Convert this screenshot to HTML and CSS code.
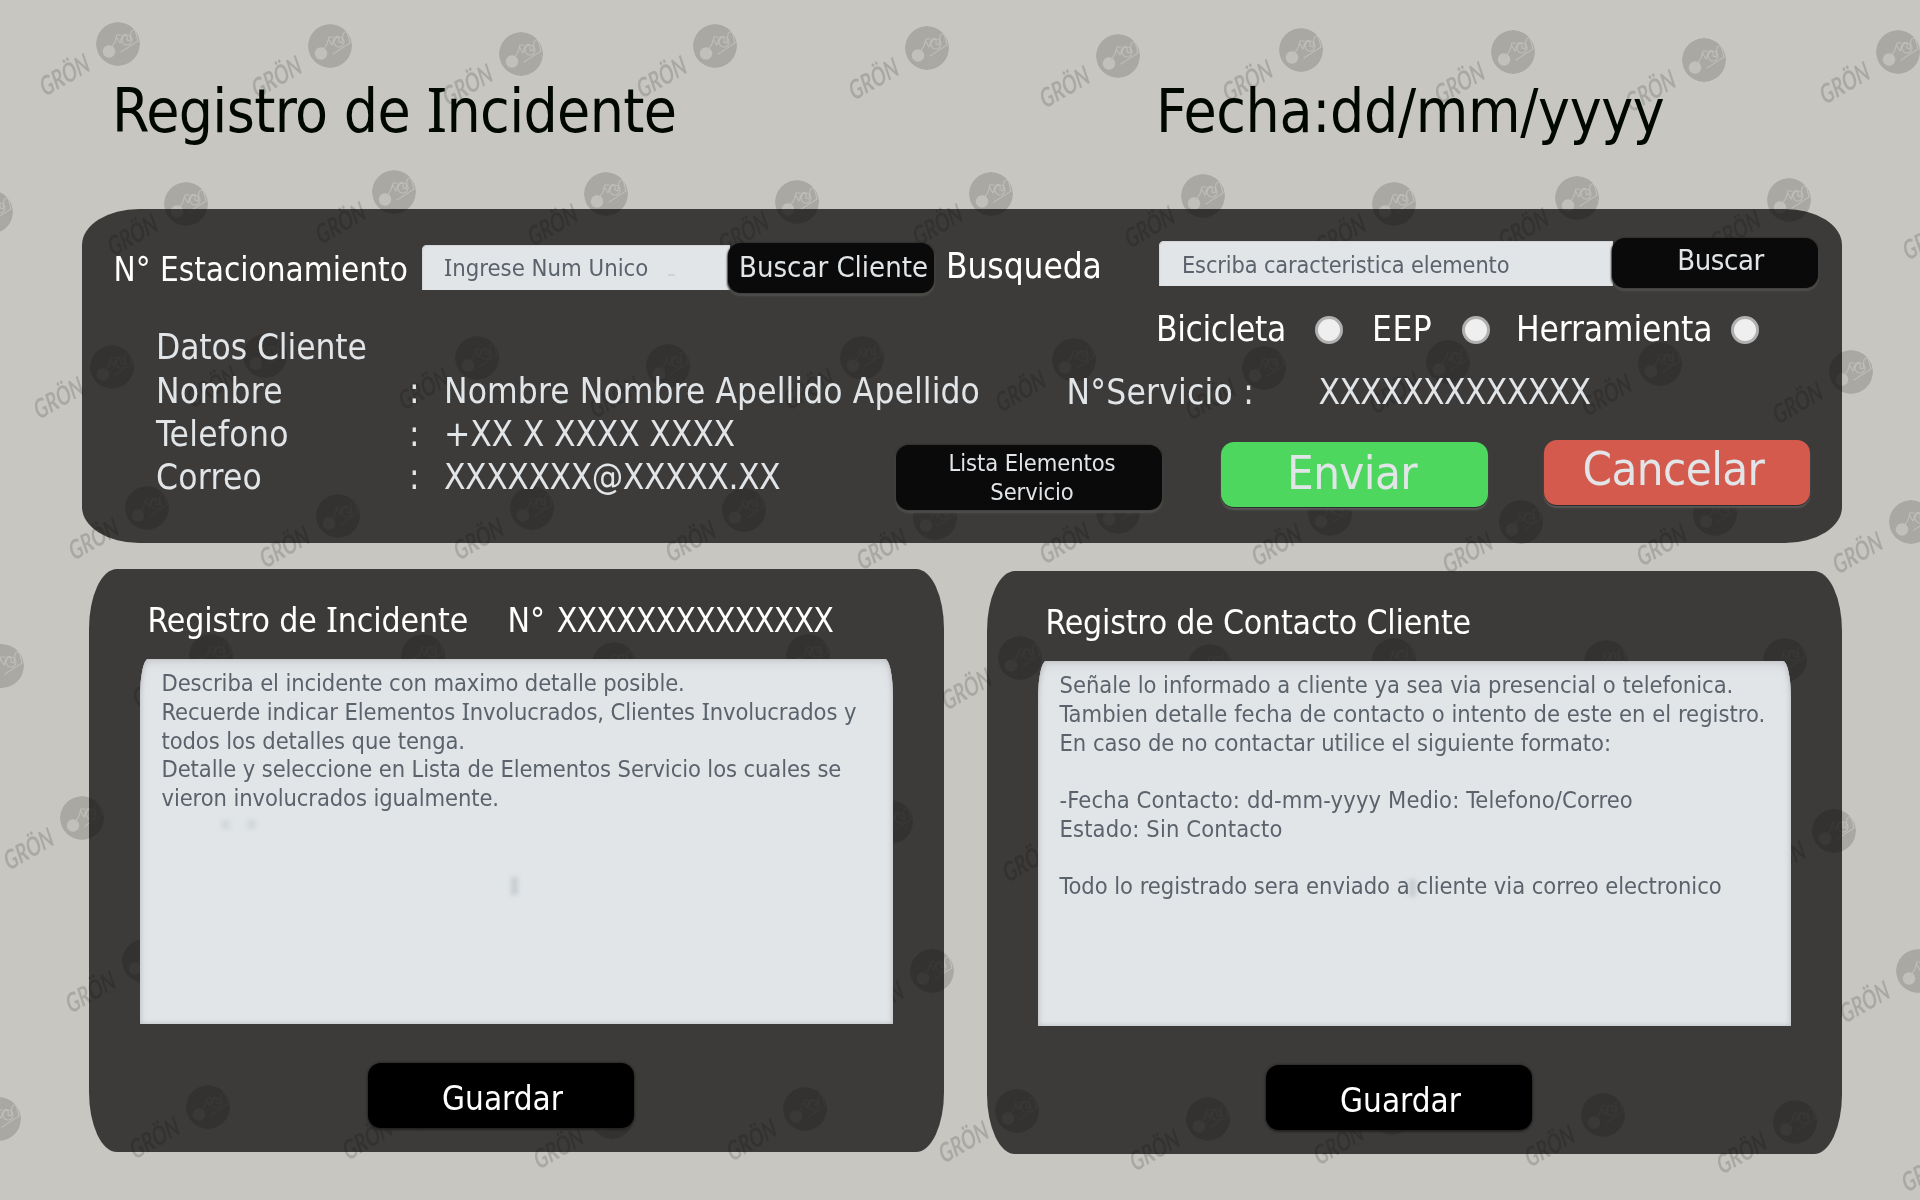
FILE: index.html
```html
<!DOCTYPE html>
<html lang="es">
<head>
<meta charset="utf-8">
<title>Registro de Incidente</title>
<link rel="stylesheet" href="styles.css">
</head>
<body>
<svg class="watermark" width="1920" height="1200" viewBox="0 0 1920 1200">
  <defs>
    <mask id="bike" x="-24" y="-24" width="48" height="48" maskUnits="userSpaceOnUse">
      <circle r="22" fill="#fff"/>
      <circle cx="-9" cy="7.5" r="6.2" fill="#333"/>
      <g fill="none" stroke="#444" stroke-width="1.1" stroke-linecap="round" stroke-linejoin="round">
        <path d="M-9 7 L-3 -2 L-1 -9 L3 -9 M-1 -6 L2 -1 L4 -6"/>
        <circle cx="9" cy="-4" r="5"/>
        <path d="M3 -5 C6 -12 10 -10 9 -4 L12 -3 L13 -12 Q16 -17 18 -11 L20 -3"/>
        <path d="M3 8 L20 -3" stroke-dasharray="2 1"/>
      </g>
    </mask>
    <g id="mark">
      <circle r="22" mask="url(#bike)"/>
      <text transform="translate(-73 53) rotate(-30) skewX(-6)" textLength="54" lengthAdjust="spacingAndGlyphs">GRÖN</text>
    </g>
  </defs>
  <g class="marks">
    <use href="#mark" x="118" y="44"/><use href="#mark" x="330" y="46"/><use href="#mark" x="521" y="54"/><use href="#mark" x="715" y="46"/><use href="#mark" x="927" y="48"/><use href="#mark" x="1118" y="56"/><use href="#mark" x="1301" y="50"/><use href="#mark" x="1513" y="52"/><use href="#mark" x="1704" y="60"/><use href="#mark" x="1898" y="52"/>
    <use href="#mark" x="-9" y="212"/><use href="#mark" x="186" y="204"/><use href="#mark" x="394" y="192"/><use href="#mark" x="606" y="194"/><use href="#mark" x="797" y="202"/><use href="#mark" x="991" y="194"/><use href="#mark" x="1203" y="196"/><use href="#mark" x="1394" y="204"/><use href="#mark" x="1577" y="198"/><use href="#mark" x="1789" y="200"/><use href="#mark" x="1981" y="208"/>
    <use href="#mark" x="112" y="367"/><use href="#mark" x="265" y="356"/><use href="#mark" x="477" y="358"/><use href="#mark" x="668" y="366"/><use href="#mark" x="862" y="358"/><use href="#mark" x="1074" y="360"/><use href="#mark" x="1264" y="368"/><use href="#mark" x="1448" y="362"/><use href="#mark" x="1660" y="364"/><use href="#mark" x="1851" y="372"/>
    <use href="#mark" x="147" y="508"/><use href="#mark" x="338" y="516"/><use href="#mark" x="532" y="508"/><use href="#mark" x="744" y="510"/><use href="#mark" x="935" y="518"/><use href="#mark" x="1118" y="512"/><use href="#mark" x="1330" y="514"/><use href="#mark" x="1521" y="522"/><use href="#mark" x="1715" y="514"/><use href="#mark" x="1911" y="522"/>
    <use href="#mark" x="2" y="666"/><use href="#mark" x="211" y="656"/><use href="#mark" x="423" y="656"/><use href="#mark" x="614" y="664"/><use href="#mark" x="808" y="656"/><use href="#mark" x="1020" y="658"/><use href="#mark" x="1210" y="666"/><use href="#mark" x="1394" y="660"/><use href="#mark" x="1606" y="662"/><use href="#mark" x="1785" y="660"/><use href="#mark" x="1997" y="668"/>
    <use href="#mark" x="82" y="818"/><use href="#mark" x="891" y="822"/><use href="#mark" x="1081" y="830"/><use href="#mark" x="1834" y="831"/>
    <use href="#mark" x="144" y="961"/><use href="#mark" x="932" y="971"/><use href="#mark" x="1918" y="971"/>
    <use href="#mark" x="-1" y="1119"/><use href="#mark" x="208" y="1107"/><use href="#mark" x="421" y="1108"/><use href="#mark" x="612" y="1117"/><use href="#mark" x="805" y="1109"/><use href="#mark" x="1017" y="1111"/><use href="#mark" x="1208" y="1119"/><use href="#mark" x="1392" y="1113"/><use href="#mark" x="1603" y="1115"/><use href="#mark" x="1795" y="1122"/><use href="#mark" x="1980" y="1140"/>
  </g>
</svg>

<header class="top">
  <h1 class="title">Registro de <span class="si">I</span>ncidente</h1>
  <div class="date">Fecha:dd/mm/yyyy</div>
</header>

<section class="panel service">
  <div class="client">
    <div class="search search-client">
      <label class="label-parking">N° Estacionamiento</label>
      <div class="field field-client"><span class="si">I</span>ngrese Num Unico<i class="dash"></i></div>
      <div class="btn btn-client">Buscar Cliente</div>
    </div>
    <div class="data">
      <div class="data-head">Datos Cliente</div>
      <span class="loose">Nombre</span><span>:</span><span>Nombre Nombre Apellido Apellido</span>
      <span class="loose">Telefono</span><span>:</span><span class="phone">+XX X XXXX XXXX</span>
      <span class="loose">Correo</span><span>:</span><span class="mail">XXXXXXX@XXXXX.XX</span>
    </div>
  </div>
  <div class="element">
    <div class="search search-element">
      <label class="label-search">Busqueda</label>
      <div class="field field-element">Escriba caracteristica elemento</div>
      <div class="btn btn-search">Buscar</div>
    </div>
    <div class="kinds">
      <label class="kind-bike">Bicicleta</label><span class="radio"></span>
      <label class="kind-eep">EEP</label><span class="radio"></span>
      <label class="kind-tool">Herramienta</label><span class="radio"></span>
    </div>
    <div class="number">
      <span class="number-label">N°Servicio :</span>
      <span class="number-value">XXXXXXXXXXXXX</span>
    </div>
    <div class="actions">
      <div class="btn btn-list">Lista Elementos<br>Servicio</div>
      <div class="btn btn-send">Enviar</div>
      <div class="btn btn-cancel">Cancelar</div>
    </div>
  </div>
</section>

<main class="records">
  <section class="panel record">
    <div class="record-head"><h2>Registro de <span class="si">I</span>ncidente</h2><span class="record-number">N° <span class="code">XXXXXXXXXXXXXX</span></span></div>
    <div class="area">
      <p>Describa el incidente con maximo detalle posible.</p>
      <p>Recuerde indicar Elementos <span class="si">I</span>nvolucrados, Clientes <span class="si">I</span>nvolucrados y<br>todos los detalles que tenga.</p>
      <p>Detalle y seleccione en Lista de Elementos Servicio los cuales se<br>vieron involucrados igualmente.</p>
      <i class="smudge smudge-a"></i><i class="smudge smudge-b"></i><i class="smudge smudge-c"></i>
    </div>
    <div class="btn btn-save">Guardar</div>
  </section>
  <section class="panel record record-contact">
    <div class="record-head"><h2 class="contact-title">Registro de Contacto Cliente</h2></div>
    <div class="area area-contact">
      <p>Señale lo informado a cliente ya sea via presencial o telefonica.<br><span class="second-line">Tambien detalle fecha de contacto o intento de este en el registro.</span><br>En caso de no contactar utilice el siguiente formato:</p>
      <p class="gap contact-line">-Fecha Contacto: dd-mm-yyyy Medio: Telefono/Correo<br>Estado: Sin Contacto</p>
      <p class="gap">Todo lo registrado sera enviado a cliente via correo electronico</p>
      <i class="smudge smudge-c"></i>
    </div>
    <div class="btn btn-save">Guardar</div>
  </section>
</main>
</body>
</html>
```
FILE: styles.css
```css
* { box-sizing: border-box; }

body {
  position: relative;
  width: 1920px;
  height: 1200px;
  margin: 0;
  overflow: hidden;
  background: #c8c6c0;
  color: #fff;
  font-family: "DejaVu Sans Condensed", "DejaVu Sans", sans-serif;
  font-stretch: condensed;
  white-space: nowrap;
}

h1, h2, p { margin: 0; font-weight: 400; }

.si { font-family: "Noto Sans", sans-serif; line-height: 0; font-size: 1.02em; }

/* Watermark lies over the panels, under their content */
.watermark { position: absolute; left: 0; top: 0; z-index: 1; }
.marks { fill: #000; opacity: .15; }
.marks text, #mark text { font: italic 700 26px "Lato", sans-serif; }

.top {
  position: relative;
  z-index: 2;
  display: flex;
  padding: 75px 0 0 112px;
  height: 147px;
  color: #000800;
  font-size: 60px;
  line-height: 72px;
}
.title { width: 1044px; font-size: 60px; letter-spacing: -.65px; }
.date { letter-spacing: -.35px; }

.panel { background: #3c3b39; }
.panel > * { position: relative; z-index: 2; }

.service {
  display: grid;
  grid-template-columns: 810px 950px;
  width: 1760px;
  height: 334px;
  margin: 62px 0 0 82px;
  border-radius: 57px / 36px;
}

.search { display: flex; align-items: flex-start; }
.search-client { padding: 34px 0 0 31.5px; }
.label-parking { flex: none; width: 308.5px; margin-top: 6.6px; font-size: 33px; line-height: 40px; }

.field {
  flex: none;
  height: 45px;
  background: #e1e5e8;
  border-top-left-radius: 5px;
  box-shadow: inset 1px 1px 1px #d2d5d8;
  color: #5b626b;
  font-size: 23.7px;
  line-height: 45px;
}
.field-client { width: 308px; margin-top: 2px; padding: 1px 0 0 22px; }
.dash { display: inline-block; width: 7px; height: 2px; margin-left: 20px; background: #cfd3d6; }
.field-element { width: 454px; margin-top: 3px; padding: 1px 0 0 23px; font-size: 23.3px; letter-spacing: -.12px; }

.btn {
  flex: none;
  background: #0a0a0a;
  border-radius: 13px;
  box-shadow: 0 0 2px #1c1c1b, 0 2px 2px 1px #51504e;
  color: #e1e5e8;
  text-align: center;
}
.btn-client { width: 206px; height: 50px; margin-left: -2px; padding-left: 5px; font-size: 29px; line-height: 48px; }
.btn-search { width: 206px; height: 50px; margin-left: -1px; padding-left: 11px; font-size: 29px; line-height: 45.4px; letter-spacing: -.4px; }

.data {
  display: grid;
  grid-template-columns: 253px 35px auto;
  margin: 33px 0 0 74px;
  color: #e1e5e8;
  font-size: 35px;
  line-height: 43px;
  letter-spacing: .1px;
}
.data-head { grid-column: 1 / -1; height: 44px; letter-spacing: -.1px; }
.loose { letter-spacing: .3px; }
.phone { letter-spacing: -.18px; }
.mail { letter-spacing: -.45px; }

.element { font-size: 35px; line-height: 43px; }
.search-element { padding-top: 29px; }
.label-search { flex: none; width: 213px; margin: 6.5px 0 0 54px; letter-spacing: -.1px; }

.kinds { display: flex; align-items: center; margin: 20px 0 0 264px; }
.kind-bike { width: 159px; letter-spacing: -.4px; }
.kind-eep { width: 90px; margin-left: 29px; letter-spacing: .5px; }
.kind-tool { width: 215px; margin-left: 26px; letter-spacing: -.15px; }
.radio {
  width: 28px;
  height: 28px;
  border: 3px solid #b1b0b0;
  border-radius: 50%;
  background: #efefef;
}

.number { display: flex; margin: 20.1px 0 0 174.5px; color: #e1e5e8; }
.number-label { width: 252px; letter-spacing: .22px; }
.number-value { letter-spacing: -.65px; }

.actions { display: flex; align-items: flex-start; margin: 25.9px 0 0 4px; }
.btn-list { width: 266px; height: 65px; margin-top: 5px; padding: 4px 0 0 6px; font-size: 23.5px; line-height: 29px; letter-spacing: -.08px; }
.btn-send { width: 267px; height: 65px; margin: 2px 0 0 59px; padding-right: 5px; background: #4ed75e; font-size: 47px; line-height: 62px; letter-spacing: -.6px; }
.btn-cancel { width: 266px; height: 65px; margin-left: 56px; padding-right: 7px; background: #d35a4d; font-size: 47px; line-height: 58px; letter-spacing: -.6px; }
.btn-send, .btn-cancel { box-shadow: 0 1px 0 #2b2e2c, 0 3px 2px #5a5957; }

.records { display: flex; align-items: flex-start; gap: 43px; margin: 26px 0 0 89px; }
.record { width: 855px; height: 583px; padding-top: 32px; border-radius: 28px / 60px; }
.record-contact { margin-top: 2px; }
.record-head { display: flex; padding-left: 58.5px; font-size: 33.5px; line-height: 40px; }
.record-head h2 { width: 360px; font-size: 33.5px; letter-spacing: -.1px; }
.record-head .contact-title { letter-spacing: -.2px; }
.code { letter-spacing: -.9px; margin-left: 2px; }

.area {
  width: 753px;
  height: 365px;
  margin: 18px 0 0 51px;
  padding: 10px 0 0 21.5px;
  border-radius: 8px 8px 0 0 / 38px 38px 0 0;
  background: #e1e5e8;
  box-shadow: inset 0 0 5px #b9bbbe, inset 0 5px 8px #d3d5d8;
  color: #5b626b;
  font-size: 23.5px;
  line-height: 28.75px;
  letter-spacing: -.1px;
}
.area-contact { letter-spacing: -.03px; }
.second-line { letter-spacing: .03px; }
.gap { margin-top: 28.75px; }
.contact-line { letter-spacing: .13px; }

.smudge { position: absolute; background: #d3d7da; filter: blur(2px); }
.smudge-a { left: 81px; top: 161px; width: 9px; height: 9px; }
.smudge-b { left: 107px; top: 161px; width: 9px; height: 9px; }
.smudge-c { left: 371px; top: 218px; width: 7px; height: 18px; background: #c9cdd1; z-index: -1; }

.btn-save {
  width: 266px;
  height: 65px;
  margin: 39px 0 0 279px;
  padding: 3px 0 0 3px;
  background: #000;
  box-shadow: 0 0 3px #1a1a19, 0 2px 2px #2a2928;
  color: #fff;
  font-size: 33px;
  line-height: 65px;
}
```
